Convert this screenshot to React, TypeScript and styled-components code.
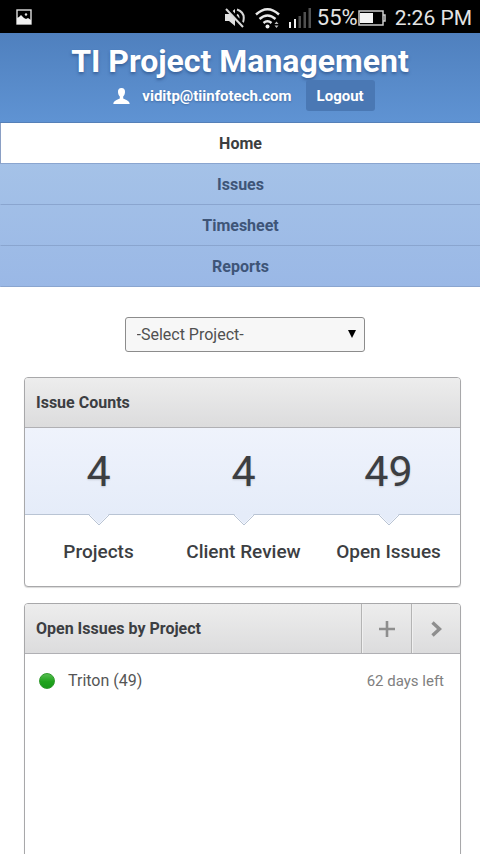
import React from "react";
import styled, { createGlobalStyle } from "styled-components";

const GlobalStyle = createGlobalStyle`
  * { box-sizing: border-box; }
  body {
    margin: 0;
    background: #fff;
    color: #3c3e42;
    font-family: Roboto, "Liberation Sans", sans-serif;
    font-size: 16px;
    line-height: 20px;
  }
  button, select { font: inherit; color: inherit; margin: 0; }
`;

const Screen = styled.div`
  height: 100vh;
  overflow: hidden;
`;

const StatusBar = styled.div`
  display: flex;
  align-items: center;
  height: 33px;
  padding: 0 8px 0 16px;
  background: #000;
  color: #e4e4e4;
`;

const StatusIcons = styled.div`
  display: flex;
  align-items: center;
  margin-left: auto;
  padding-top: 2px;
  font-size: 22px;
  line-height: 32px;
  white-space: nowrap;
`;

const StatusSvg = styled.svg<{ $gap: number }>`
  flex: none;
  display: block;
  margin-right: ${(p) => p.$gap}px;
`;

const Clock = styled.time`
  font-size: 21px;
`;

const Header = styled.header`
  display: flex;
  flex-direction: column;
  align-items: center;
  padding: 10px 0 11px;
  background: linear-gradient(#4f80be, #5f93d3);
  border-bottom: 1px solid #5580b8;
  color: #fff;
`;

const Title = styled.h1`
  margin: 0;
  font-size: 32px;
  line-height: 37px;
  font-weight: 700;
  text-shadow: 0 2px 3px rgba(30, 60, 110, 0.5);
`;

const Account = styled.div`
  display: flex;
  align-items: center;
  padding-left: 8px;
  font-size: 15px;
  font-weight: 700;
`;

const UserIcon = styled.svg`
  margin-right: 12px;
`;

const Email = styled.span`
  margin-right: 14px;
  text-shadow: 0 1px 2px rgba(30, 60, 110, 0.4);
`;

const Logout = styled.button`
  height: 31px;
  padding: 0 11px;
  border: 0;
  border-radius: 3px;
  background: #4a78b4;
  cursor: pointer;
  && { color: #fff; font-weight: 700; }
`;

const Nav = styled.nav`
  background: linear-gradient(#a8c5e8, #9ab8e6);
`;

const NavLink = styled.a<{ $active?: boolean }>`
  display: block;
  padding: 11px 0 9px;
  border-bottom: 1px solid #8aa5cf;
  border-left: 1px solid ${(p) => (p.$active ? "#8a9fc4" : "transparent")};
  background: ${(p) => (p.$active ? "#fff" : "transparent")};
  color: ${(p) => (p.$active ? "#3c3e40" : "#3e5578")};
  font-weight: 700;
  text-align: center;
  text-decoration: none;
`;

const Main = styled.main`
  display: flex;
  flex-direction: column;
  gap: 16px;
  padding: 30px 19px 0 24px;
`;

const SelectWrap = styled.div`
  position: relative;
  width: 55%;
  margin: 0 0 9px 23%;
`;

const ProjectSelect = styled.select`
  display: block;
  width: 100%;
  height: 35px;
  padding: 0 32px 0 11px;
  border: 1px solid #8c8c8c;
  border-radius: 3px;
  background: #f7f7f7;
  appearance: none;
  && { color: #505050; }
`;

const SelectArrow = styled.svg`
  position: absolute;
  top: 13px;
  right: 9px;
  pointer-events: none;
`;

const Panel = styled.section<{ $tall?: boolean }>`
  min-height: ${(p) => (p.$tall ? "320px" : "0")};
  border: 1px solid #a8a8aa;
  border-radius: 4px;
  background: #fff;
  box-shadow: 0 1px 1px rgba(0, 0, 0, 0.15);
  overflow: hidden;
`;

const PanelHeader = styled.div`
  display: flex;
  height: 50px;
  border-bottom: 1px solid #b0b0b4;
  background: linear-gradient(#ededed, #dcdcdd);
`;

const PanelTitle = styled.h2`
  flex: 1;
  margin: 0;
  padding-left: 11px;
  font-size: 16px;
  line-height: 50px;
  font-weight: 700;
`;

const HeaderButton = styled.button`
  display: flex;
  align-items: center;
  justify-content: center;
  width: 49px;
  padding: 0;
  border: 0;
  border-left: 1px solid #b4b4b4;
  background: transparent;
  box-shadow: inset 1px 0 0 #f0f0f0;
  cursor: pointer;
  &:first-of-type { width: 50px; }
`;

const Counts = styled.dl`
  display: grid;
  grid-template-columns: repeat(3, 1fr);
  margin: 0;
`;

const Count = styled.div`
  display: flex;
  flex-direction: column-reverse;
  text-align: center;
`;

const CountValue = styled.dd`
  position: relative;
  height: 87px;
  margin: 0;
  padding-left: 2px;
  border-bottom: 1px solid #b9c4d4;
  background: linear-gradient(#eff3fc, #e5ecf9);
  font-size: 43px;
  line-height: 86px;
  text-shadow: 0 1px 2px rgba(0, 0, 0, 0.15);
`;

const Notch = styled.svg`
  position: absolute;
  left: 50%;
  top: 100%;
  margin: -1px 0 0 -11px;
`;

const CountLabel = styled.dt`
  height: 71px;
  padding: 25px 0 0 2px;
  font-size: 19px;
  line-height: 24px;
  font-weight: 500;
  white-space: nowrap;
`;

const IssueRow = styled.div`
  display: flex;
  align-items: center;
  padding: 17px 16px 16px 14px;
`;

const StatusDot = styled.span`
  width: 16px;
  height: 16px;
  margin-right: 13px;
  border: 1px solid #2f9a2c;
  border-radius: 50%;
  background: linear-gradient(#55bd50, #1fa31c 55%, #18981a);
`;

const IssueName = styled.span`
  flex: 1;
  color: #555;
`;

const DaysLeft = styled.span`
  color: #808080;
  font-size: 15px;
`;

const navItems = ["Home", "Issues", "Timesheet", "Reports"];

const counts = [
  { label: "Projects", value: 4 },
  { label: "Client Review", value: 4 },
  { label: "Open Issues", value: 49 },
];

function StatusArea() {
  return (
    <StatusBar>
      <StatusSvg $gap={0} width="16" height="16" viewBox="0 0 16 16" aria-label="Image notification">
        <rect x="1" y="1" width="14" height="14" fill="none" stroke="#ddd" strokeWidth="1.4" />
        <path d="M1 9l2-1 2-2 3 3 2 1 2-1 3 2v4H1z" fill="#f0f0f0" />
        <circle cx="10" cy="5.5" r="1.2" fill="#ddd" />
      </StatusSvg>
      <StatusIcons>
        <StatusSvg $gap={8} width="23" height="22" viewBox="0 0 23 22" aria-label="Muted">
          <path d="M1 7h4l6-5v17l-6-5H1z" fill="#e0e0e0" />
          <path d="M13 7.500q3 3 0 6M13 2.500q9 3 6 13" fill="none" stroke="#d8d8d8" strokeWidth="2" />
          <path d="M4 1l17 19" stroke="#000" strokeWidth="3" />
          <path d="M2 2l17 18" stroke="#d8d8d8" strokeWidth="2" />
        </StatusSvg>
        <StatusSvg $gap={8} width="26" height="22" viewBox="0 0 26 22" aria-label="Wi-Fi">
          <path d="M1 7.5Q12.500-3 24 7.500M4.500 12q8-7 16 0M8.500 16q4-3.500 8 0" fill="none" stroke="#e8e8e8" strokeWidth="2.400" />
          <circle cx="12.500" cy="19.500" r="2" fill="#f0f0f0" />
          <path d="M19.500 17l2-2.500 2 2.500zM19.500 18.500l2 2.500 2-2.500z" fill="#bbb" />
        </StatusSvg>
        <StatusSvg $gap={6} width="22" height="20" viewBox="0 0 22 20" aria-label="Signal">
          <path d="M0 14h2v6H0zM5 11h2v9H5z" fill="#f0f0f0" />
          <path d="M9.500 8h2.500v12H9.500zM14.500 4H17v16h-2.500zM19.500 0H22v20h-2.500z" fill="#505050" />
        </StatusSvg>
        <span>55%</span>
        <StatusSvg $gap={9} width="28" height="16" viewBox="0 0 28 16" aria-label="Battery">
          <path d="M1 1h24v14H1zM25 5h2v6h-2" fill="none" stroke="#ccc" strokeWidth="1.5" />
          <rect x="2" y="3" width="13" height="10" fill="#f4f4f4" />
        </StatusSvg>
        <Clock>2:26 PM</Clock>
      </StatusIcons>
    </StatusBar>
  );
}

export default function App() {
  return (
    <Screen>
      <GlobalStyle />
      <StatusArea />
      <Header>
        <Title>TI Project Management</Title>
        <Account>
          <UserIcon width="17" height="16" viewBox="0 0 17 16" aria-hidden="true">
            <path d="M8.500 0C5.800 0 4.800 1.800 5 4.300 5.200 6.500 6 7.800 6.800 8.500v1.700C6.500 11.500 0.500 11.700 0.300 16h16.400c-.2-4.300-6.200-4.500-6.500-5.800V8.500c.8-.7 1.600-2 1.800-4.200C12.200 1.800 11.200 0 8.500 0z" fill="#fff" />
          </UserIcon>
          <Email>viditp@tiinfotech.com</Email>
          <Logout type="button">Logout</Logout>
        </Account>
      </Header>
      <Nav>
        {navItems.map((item, i) => (
          <NavLink key={item} href="#" $active={i === 0} aria-current={i === 0 ? "page" : undefined}>
            {item}
          </NavLink>
        ))}
      </Nav>
      <Main>
        <SelectWrap>
          <ProjectSelect aria-label="Project">
            <option>-Select Project-</option>
          </ProjectSelect>
          <SelectArrow width="8" height="8" viewBox="0 0 8 8" aria-hidden="true">
            <path d="M0 0h8L4 8z" fill="#000" />
          </SelectArrow>
        </SelectWrap>
        <Panel>
          <PanelHeader>
            <PanelTitle>Issue Counts</PanelTitle>
          </PanelHeader>
          <Counts>
            {counts.map((c) => (
              <Count key={c.label}>
                <CountLabel>{c.label}</CountLabel>
                <CountValue>
                  {c.value}
                  <Notch width="24" height="13" viewBox="0 0 24 13" aria-hidden="true">
                    <path d="M1 0L12 11 23 0z" fill="#e5ecf9" />
                    <path d="M1 1L12 12 23 1" fill="none" stroke="#b9c4d4" />
                  </Notch>
                </CountValue>
              </Count>
            ))}
          </Counts>
        </Panel>
        <Panel $tall>
          <PanelHeader>
            <PanelTitle>Open Issues by Project</PanelTitle>
            <HeaderButton type="button" aria-label="Add issue">
              <svg width="16" height="16" viewBox="0 0 16 16">
                <path d="M8 0v16M0 8h16" stroke="#8e8e8e" strokeWidth="2.600" />
              </svg>
            </HeaderButton>
            <HeaderButton type="button" aria-label="View all">
              <svg width="11" height="16" viewBox="0 0 11 16">
                <path d="M1.500 1.500L8.500 8l-7 6.500" fill="none" stroke="#8e8e8e" strokeWidth="3.400" />
              </svg>
            </HeaderButton>
          </PanelHeader>
          <IssueRow>
            <StatusDot />
            <IssueName>Triton (49)</IssueName>
            <DaysLeft>62 days left</DaysLeft>
          </IssueRow>
        </Panel>
      </Main>
    </Screen>
  );
}
